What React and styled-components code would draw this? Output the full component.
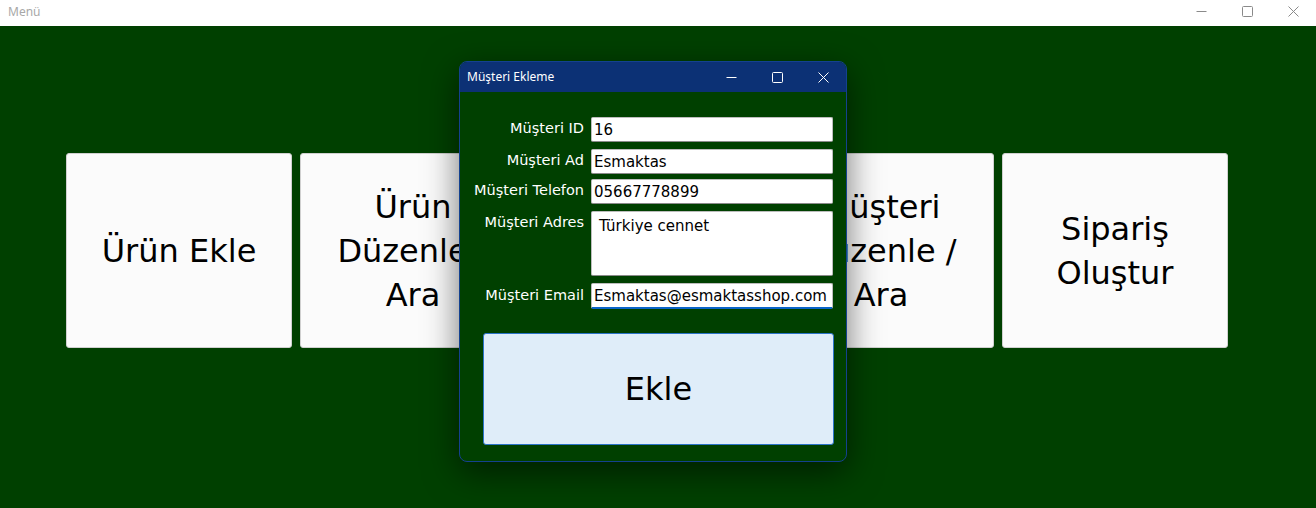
import React from "react";
import styled, { createGlobalStyle } from "styled-components";

const GlobalStyle = createGlobalStyle`
  html, body {
    margin: 0;
    padding: 0;
    width: 1316px;
    height: 508px;
    overflow: hidden;
    background: #ffffff;
  }
  * { box-sizing: border-box; }
`;

const Window = styled.div`
  position: relative;
  width: 1316px;
  height: 508px;
  display: flex;
  flex-direction: column;
`;

const TitleBar = styled.div`
  height: 26px;
  display: flex;
  align-items: center;
  justify-content: space-between;
  background: ${(p) => p.bg || "#ffffff"};
  color: ${(p) => p.fg || "#a8a8a8"};
  font-family: "Noto Sans", "Open Sans", sans-serif;
  font-size: 12px;
  padding-left: 8px;
  padding-bottom: 4px;
`;

const Controls = styled.div`
  display: flex;
  height: 100%;
  align-self: stretch;
`;

const CtrlBtn = styled.div`
  width: 46px;
  display: flex;
  align-items: center;
  justify-content: center;
`;

const Content = styled.div`
  flex: 1;
  background: #004000;
  padding: 127px 0 0 66px;
`;

const CardRow = styled.div`
  display: flex;
  gap: 8px;
`;

const Card = styled.div`
  width: 226px;
  height: 195px;
  background: #fbfbfb;
  border: 1px solid #d0d0d0;
  border-radius: 3px;
  display: flex;
  align-items: center;
  justify-content: center;
  text-align: center;
  padding: 0 12px;
  font-family: "DejaVu Sans", "Liberation Sans", sans-serif;
  font-size: 32px;
  line-height: 44px;
  color: #000;
`;

const Dialog = styled.div`
  position: absolute;
  left: 459px;
  top: 61px;
  width: 388px;
  height: 401px;
  border: 1px solid #14418f;
  border-radius: 8px;
  overflow: hidden;
  background: #004000;
  box-shadow: 0 10px 34px rgba(0, 0, 0, 0.55);
  display: flex;
  flex-direction: column;
`;

const DialogTitle = styled(TitleBar)`
  height: 30px;
  padding-left: 7px;
  padding-bottom: 0;
  flex-shrink: 0;

  & > span {
    margin-top: -2px;
  }
`;

const Body = styled.div`
  flex: 1;
  padding: 25px 12px 15px 6px;
  display: flex;
  flex-direction: column;
`;

const Form = styled.div`
  display: grid;
  grid-template-columns: 118px 242px;
  column-gap: 7px;
`;

const Label = styled.div`
  color: #ffffff;
  font-family: "DejaVu Sans", "Liberation Sans", sans-serif;
  font-size: 14.5px;
  text-align: right;
  white-space: nowrap;
  align-self: ${(p) => (p.top ? "start" : "center")};
  padding-top: ${(p) => (p.top ? "3px" : "0")};
  padding-bottom: ${(p) => (p.top ? "0" : "3px")};
  margin-top: ${(p) => p.mt || 0}px;
`;

const Field = styled.div`
  height: ${(p) => p.h || 25}px;
  margin-top: ${(p) => p.mt || 0}px;
  background: #ffffff;
  border: 1px solid #bdbdbd;
  border-bottom: ${(p) => (p.focus ? "2px solid #0a64c8" : "1px solid #8a8a8a")};
  border-radius: 2px;
  color: #000;
  font-family: "DejaVu Sans", "Liberation Sans", sans-serif;
  font-size: 15px;
  display: flex;
  align-items: ${(p) => (p.multi ? "flex-start" : "center")};
  padding: ${(p) => (p.multi ? "5px 7px" : "1px 2px 0")};
  white-space: nowrap;
  overflow: hidden;
`;

const AddButton = styled.div`
  margin: 24px 0 0 17px;
  height: 112px;
  background: #dfedf9;
  border: 1px solid #2c74c8;
  border-radius: 3px;
  display: flex;
  align-items: center;
  justify-content: center;
  font-family: "DejaVu Sans", "Liberation Sans", sans-serif;
  font-size: 32px;
  color: #000;
`;

const Icon = ({ type, color }) => {
  if (type === "min")
    return (
      <svg width="11" height="11" viewBox="0 0 11 11">
        <path d="M0.5 5.5h10" stroke={color} strokeWidth="1" />
      </svg>
    );
  if (type === "max")
    return (
      <svg width="11" height="11" viewBox="0 0 11 11">
        <rect x="0.5" y="0.5" width="10" height="10" rx="1" fill="none" stroke={color} strokeWidth="1" />
      </svg>
    );
  return (
    <svg width="11" height="11" viewBox="0 0 11 11">
      <path d="M0.5 0.5l10 10M10.5 0.5l-10 10" stroke={color} strokeWidth="1" />
    </svg>
  );
};

const WinControls = ({ color }) => (
  <Controls>
    <CtrlBtn><Icon type="min" color={color} /></CtrlBtn>
    <CtrlBtn><Icon type="max" color={color} /></CtrlBtn>
    <CtrlBtn><Icon type="close" color={color} /></CtrlBtn>
  </Controls>
);

const cards = [
  "Ürün Ekle",
  "Ürün Düzenle / Ara",
  "Müşteri Ekle",
  "Müşteri Düzenle / Ara",
  "Sipariş Oluştur",
];

export default function App() {
  return (
    <Window>
      <GlobalStyle />
      <TitleBar>
        <span>Menü</span>
        <WinControls color="#8a8a8a" />
      </TitleBar>
      <Content>
        <CardRow>
          {cards.map((c) => (
            <Card key={c}>{c}</Card>
          ))}
        </CardRow>
      </Content>

      <Dialog>
        <DialogTitle bg="#0c3175" fg="#ffffff">
          <span>Müşteri Ekleme</span>
          <WinControls color="#ffffff" />
        </DialogTitle>
        <Body>
          <Form>
            <Label>Müşteri ID</Label>
            <Field>16</Field>
            <Label mt={7}>Müşteri Ad</Label>
            <Field mt={7}>Esmaktas</Field>
            <Label mt={5}>Müşteri Telefon</Label>
            <Field mt={5}>05667778899</Field>
            <Label top mt={7}>Müşteri Adres</Label>
            <Field mt={7} h={65} multi>Türkiye cennet</Field>
            <Label mt={7}>Müşteri Email</Label>
            <Field mt={7} h={26} focus>Esmaktas@esmaktasshop.com</Field>
          </Form>
          <AddButton>Ekle</AddButton>
        </Body>
      </Dialog>
    </Window>
  );
}
